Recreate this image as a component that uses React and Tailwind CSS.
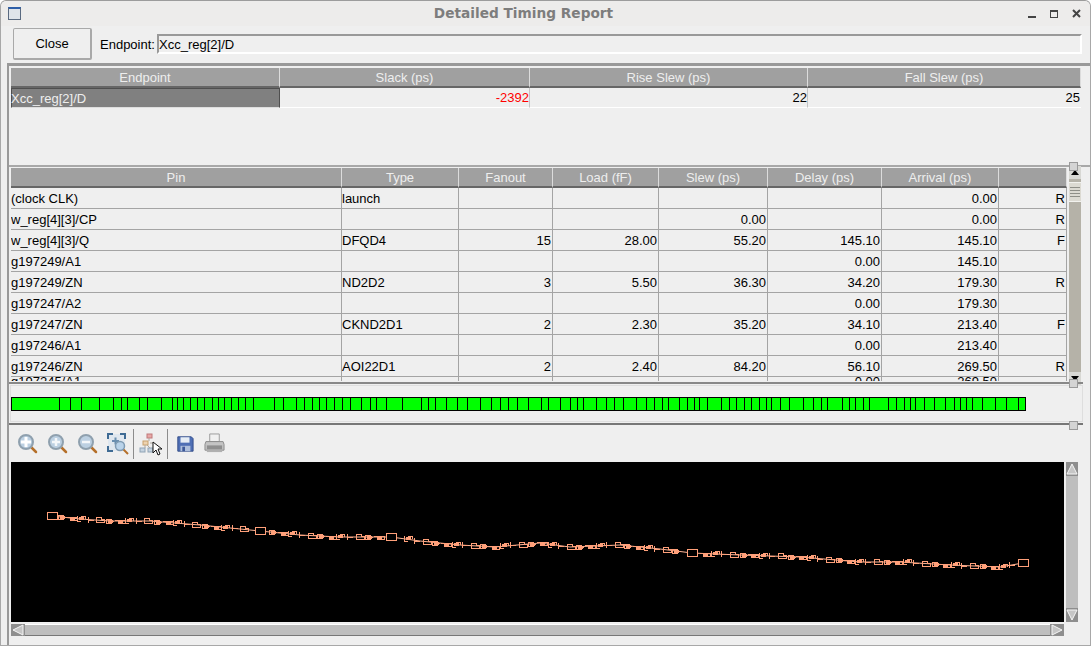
import React from 'react';

const FONT = "font-['Liberation_Sans',Arial,sans-serif]";

const endpointCols = 'grid grid-cols-[269px_250px_278px_273px]';
const pinCols = 'grid grid-cols-[331px_117px_94px_106px_109px_114px_117px_68px]';

const pinHeaders = ['Pin', 'Type', 'Fanout', 'Load (fF)', 'Slew (ps)', 'Delay (ps)', 'Arrival (ps)', ''];

const pinRows = [
    ['(clock CLK)', 'launch', '', '', '', '', '0.00', 'R'],
    ['w_reg[4][3]/CP', '', '', '', '0.00', '', '0.00', 'R'],
    ['w_reg[4][3]/Q', 'DFQD4', '15', '28.00', '55.20', '145.10', '145.10', 'F'],
    ['g197249/A1', '', '', '', '', '0.00', '145.10', ''],
    ['g197249/ZN', 'ND2D2', '3', '5.50', '36.30', '34.20', '179.30', 'R'],
    ['g197247/A2', '', '', '', '', '0.00', '179.30', ''],
    ['g197247/ZN', 'CKND2D1', '2', '2.30', '35.20', '34.10', '213.40', 'F'],
    ['g197246/A1', '', '', '', '', '0.00', '213.40', ''],
    ['g197246/ZN', 'AOI22D1', '2', '2.40', '84.20', '56.10', '269.50', 'R'],
];

const cutRow = ['g197245/A1', '', '', '', '', '0.00', '269.50', ''];

// x position of every black divider in the path bar
const barStops = [
    11, 59, 70, 81, 99, 113, 121, 127, 139, 147, 161, 172, 177, 183, 190, 197, 204, 212, 218, 224, 231, 238, 245, 253,
    274, 283, 296, 304, 312, 319, 326, 334, 342, 350, 361, 370, 376, 386, 402, 421, 428, 435, 446, 457, 467, 480, 491,
    500, 508, 517, 528, 541, 548, 560, 570, 577, 583, 596, 606, 614, 623, 636, 646, 654, 662, 668, 679, 687, 694, 699,
    707, 721, 729, 736, 744, 751, 759, 766, 771, 780, 789, 803, 813, 821, 827, 842, 849, 855, 863, 869, 888, 896, 904,
    910, 915, 924, 934, 945, 954, 960, 966, 972, 982, 995, 1006, 1018, 1025,
];

const pathPoints = [
    [52, 516], [80, 519], [110, 521], [150, 521], [200, 525], [260, 531], [300, 535], [340, 537], [391, 537],
    [420, 541], [460, 545], [495, 547], [540, 543], [570, 547], [620, 545], [660, 549], [692, 553], [740, 555],
    [800, 557], [860, 562], [900, 562], [950, 565], [1000, 567], [1023, 563],
];

const bigCells = [[52, 516], [260, 531], [391, 537], [692, 553], [1023, 563]];

const pathY = (x) => {
    for (let i = 1; i < pathPoints.length; i++) {
        const [x0, y0] = pathPoints[i - 1];
        const [x1, y1] = pathPoints[i];
        if (x <= x1) return y0 + ((y1 - y0) * (x - x0)) / (x1 - x0);
    }
    return 563;
};

const smallCells = [];
for (let x = 62; x < 1014; x += 9.6) {
    if (bigCells.some(([bx]) => Math.abs(bx - x) < 9)) continue;
    const n = smallCells.length;
    smallCells.push([Math.round(x), Math.round(pathY(x)) - (n % 5 === 2 ? 1 : 0), (n * 7) % 5]);
}

const HeaderCell = ({ children }) => (
    <div className="h-[20px] flex items-center justify-center bg-[#a0a0a0] text-[#eeeeee] border-r border-r-[#dcdcdc] border-b-2 border-b-[#666666]">
        {children}
    </div>
);

const ScrollButton = ({ dir }) => {
    const points = {
        up: '1,12 6,2 11,12',
        down: '1,2 6,12 11,2',
        left: '12,1 2,6 12,11',
        right: '2,1 12,6 2,11',
    }[dir];
    const size = dir === 'up' || dir === 'down' ? 'w-[12px] h-[14px]' : 'w-[14px] h-[12px]';
    return (
        <div className={`${size} bg-[#8e8e8e] shrink-0`}>
            <svg width="14" height="14" viewBox="0 0 14 14" className="block">
                <polygon points={points} fill="#c6c6c6" stroke="#f6f6f6" strokeWidth="1" />
            </svg>
        </div>
    );
};

const Magnifier = ({ sign }) => (
    <svg width="22" height="22" viewBox="0 0 22 22">
        <line x1="13" y1="13" x2="19" y2="19" stroke="#b5702a" strokeWidth="2.5" strokeLinecap="round" />
        <circle cx="9" cy="9" r="7" fill="#bcd0e2" stroke="#8fa0ae" strokeWidth="2" />
        {sign === 'fit' && <path d="M4 9h10M9 4v10" stroke="#ffffff" strokeWidth="3" />}
        {sign === 'plus' && <path d="M5 9h8M9 5v8" stroke="#f4f7fa" strokeWidth="2.5" />}
        {sign === 'minus' && <path d="M5 9h8" stroke="#f4f7fa" strokeWidth="2.5" />}
    </svg>
);

const ZoomFrame = () => (
    <svg width="22" height="22" viewBox="0 0 22 22">
        <rect x="1" y="1" width="17" height="17" fill="#dfe7ef" />
        <path d="M1 6V1h5M13 1h5v5M1 13v5h5" fill="none" stroke="#3f6b94" strokeWidth="2" />
        <path d="M5 8h7M8.500 4.500v7" stroke="#6a8fb0" strokeWidth="2" />
        <line x1="16" y1="16" x2="21" y2="21" stroke="#b5702a" strokeWidth="2" />
        <circle cx="13" cy="13" r="4.500" fill="#b9d3ea" stroke="#7f9bb3" strokeWidth="1.500" />
    </svg>
);

const TreeCursor = () => (
    <svg width="24" height="24" viewBox="0 0 24 24">
        <rect x="8" y="2" width="5" height="4" fill="#e8a7a7" stroke="#c07a7a" />
        <rect x="4" y="9" width="5" height="4" fill="#edd3b0" stroke="#c9a26e" />
        <rect x="1" y="16" width="5" height="4" fill="#c5d3e0" stroke="#8fa3b5" />
        <rect x="9" y="16" width="5" height="4" fill="#c5d3e0" stroke="#8fa3b5" />
        <path d="M10 6v3M6 13v3M8 13l3 3M11 11h3" stroke="#b0a8a0" fill="none" />
        <path d="M14 10v11l3-3 2 5 2-1-2-5h4z" fill="#ffffff" stroke="#111111" strokeWidth="1" />
    </svg>
);

const SaveIcon = () => (
    <svg width="18" height="18" viewBox="0 0 20 20">
        <path d="M2 2h15l2 2v14H2z" fill="#4f6fb5" stroke="#2f4a86" />
        <rect x="5" y="2.500" width="10" height="6" fill="#e6edf5" />
        <rect x="5" y="12" width="11" height="6" fill="#aebfdc" />
        <rect x="7" y="13" width="3" height="5" fill="#3c5898" />
    </svg>
);

const PrintIcon = () => (
    <svg width="21" height="21" viewBox="0 0 22 22">
        <path d="M6 1h10v8H6z" fill="#f0f0f0" stroke="#9a9a9a" />
        <path d="M2 9h18l1 3v6H1v-6z" fill="#c4c4c4" stroke="#8a8a8a" />
        <rect x="3" y="13" width="16" height="4" fill="#8f8f8f" />
        <rect x="3" y="18" width="16" height="2" fill="#b0b0b0" />
    </svg>
);

const cellPath = (x, y, kind) => {
    if (kind === 0) return `M${x - 4} ${y - 2}h5v4h-5zM${x + 1} ${y}h3`;
    if (kind === 1) return `M${x - 3} ${y - 3}v6M${x - 3} ${y}h6`;
    if (kind === 2) return `M${x - 5} ${y - 1}h3v3h7v-3h-4`;
    if (kind === 3) return `M${x - 4} ${y - 3}h5v2h3v3h-8z`;
    return `M${x - 4} ${y - 2}v5h4M${x} ${y - 2}h4v3`;
};

const Schematic = () => (
    <svg width="1053" height="160" viewBox="11 462 1053 160" className="block">
        <polyline points={pathPoints.map((p) => p.join(',')).join(' ')} fill="none" stroke="#ffb596" strokeWidth="1" />
        {smallCells.map(([x, y, kind]) => (
            <g key={x} stroke="#ffa07a" strokeWidth="1" fill="none" shapeRendering="crispEdges">
                <path d={cellPath(x, y, kind)} />
                {kind % 2 === 0 && <rect x={x - 2} y={y - 1} width="4" height="2" fill="#ffa07a" />}
            </g>
        ))}
        {bigCells.map(([x, y]) => (
            <rect key={x} x={x - 5} y={y - 4} width="10" height="7.500" fill="#000000" stroke="#ffa07a" strokeWidth="1" shapeRendering="crispEdges" />
        ))}
    </svg>
);

const App = () => {
    return (
        <div className={`${FONT} w-[1092px] h-[647px] overflow-hidden bg-white text-[13px] leading-none text-black`}>
            <div className="w-[1091px] h-[646px] flex flex-col bg-[#efefef] rounded-t-md border border-[#a8a8a8] border-t-[#9c9c9c]">
                {/* title bar */}
                <div className="h-[25px] shrink-0 flex items-center bg-[#edeceb] rounded-t-md pl-[7px] pr-[9px]">
                    <div className="w-[13px] h-[13px] border border-[#5a6a80] border-t-2 border-t-[#2f5fa8] bg-[#dfe4ea]" />
                    <div className="flex-1 text-center font-['DejaVu_Sans'] font-bold text-[13.7px] text-[#7d7d7d] pr-[2px]">
                        Detailed Timing Report
                    </div>
                    <div className="flex items-center gap-[14px] text-[#444444]">
                        <div className="w-[8px] h-[2px] bg-[#444444] mt-[6px]" />
                        <div className="w-[8px] h-[8px] border border-[#444444] border-t-2" />
                        <svg width="9" height="9" viewBox="0 0 9 9">
                            <path d="M1 1l7 7M8 1l-7 7" stroke="#444444" strokeWidth="2" />
                        </svg>
                    </div>
                </div>

                {/* close + endpoint */}
                <div className="h-[37px] shrink-0 flex pl-[12px] pt-[2px]">
                    <button className="w-[79px] h-[32px] bg-[#efefef] border border-[#a9a9a9] border-b-2 border-r-2 rounded-[2px] text-[13px]">
                        Close
                    </button>
                    <div className="ml-[8px] w-[57px] h-[32px] flex items-center">Endpoint:</div>
                    <div className="mt-[6px] w-[925px] h-[20px] flex items-center bg-[#efefef] border-2 border-t-[#999999] border-l-[#999999] border-r-white border-b-white">
                        Xcc_reg[2]/D
                    </div>
                </div>

                {/* main panes */}
                <div className="flex-1 min-h-0 ml-[6px] border-l-2 border-l-[#999999] border-t-[3px] border-t-[#999999] flex flex-col relative">
                    {/* endpoint table */}
                    <div className="h-[99px] shrink-0 pt-[2px] pl-[2px]">
                        <div className={endpointCols}>
                            {['Endpoint', 'Slack (ps)', 'Rise Slew (ps)', 'Fall Slew (ps)'].map((h) => (
                                <HeaderCell key={h}>{h}</HeaderCell>
                            ))}
                        </div>
                        <div className={`${endpointCols} h-[20px]`}>
                            <div className="flex items-center bg-[#808080] text-[#eeeeee] border border-[#4f4f4f] border-b-[#dddddd]">
                                <span className="-ml-px">Xcc_reg[2]/D</span>
                            </div>
                            <div className="flex items-center justify-end text-[#ff0000] border-b border-b-white border-r border-r-[#c4c4c4]">-2392</div>
                            <div className="flex items-center justify-end border-b border-b-white border-r border-r-[#c4c4c4]">22</div>
                            <div className="flex items-center justify-end pr-[1px] border-b border-b-white">25</div>
                        </div>
                    </div>

                    {/* pin table + scrollbar */}
                    <div className="h-[218px] shrink-0 border-t-2 border-t-[#a8a8a8] flex pl-[2px]">
                        <div className="w-[1057px] h-[214px] overflow-hidden pt-[1px]">
                            <div className={pinCols}>
                                {pinHeaders.map((h, i) => (
                                    <HeaderCell key={i}>{h}</HeaderCell>
                                ))}
                            </div>
                            {pinRows.map((row) => (
                                <div key={row[0]} className={`${pinCols} h-[21px]`}>
                                    {row.map((cell, i) => (
                                        <div
                                            key={i}
                                            className={`flex items-center pr-[1px] border-r border-b border-[#a4a4a4] ${i < 2 ? 'justify-start' : 'justify-end'}`}
                                        >
                                            {cell}
                                        </div>
                                    ))}
                                </div>
                            ))}
                            {/* half hidden row at the bottom of the viewport */}
                            <div className={`${pinCols} h-[21px] leading-[9px]`}>
                                {cutRow.map((cell, i) => (
                                    <div
                                        key={i}
                                        className={`flex items-start pr-[1px] border-r border-[#a4a4a4] ${i < 2 ? 'justify-start' : 'justify-end'}`}
                                    >
                                        {cell}
                                    </div>
                                ))}
                            </div>
                        </div>
                        <div className="w-[12px] h-[219px] -mt-[1px] ml-[1px] flex flex-col bg-[#b5b2a8]">
                            <div className="h-[13px] bg-[#d8d8d4] flex items-center justify-center">
                                <div className="w-0 h-0 border-x-[4px] border-x-transparent border-b-[5px] border-b-black" />
                            </div>
                            <div className="mt-[3px] h-[20px] bg-[#dcdad2] flex flex-col justify-center gap-[2px] px-[1px] border-y border-[#f2f2ee]">
                                <div className="h-px bg-[#8f8f88]" />
                                <div className="h-px bg-[#8f8f88]" />
                                <div className="h-px bg-[#8f8f88]" />
                                <div className="h-px bg-[#8f8f88]" />
                            </div>
                            <div className="flex-1" />
                            <div className="h-[13px] bg-[#d8d8d4] flex items-center justify-center">
                                <div className="w-0 h-0 border-x-[4px] border-x-transparent border-t-[5px] border-t-black" />
                            </div>
                        </div>
                    </div>

                    {/* path bar */}
                    <div className="h-[43px] shrink-0 border-t-2 border-t-[#888888] border-b-2 border-b-[#777777] -mt-[1px] pl-[1px] pt-[1px] mr-[7px]">
                        <div className="h-[37px] border border-[#dedede] pt-[11px]">
                            <div className="flex w-[1015px] h-[14px] border-y border-r border-black bg-[#00ff00]">
                                {barStops.slice(1).map((stop, i) => (
                                    <div
                                        key={stop}
                                        className="h-full shrink-0 border-l border-l-black"
                                        style={{ width: stop - barStops[i] }}
                                    />
                                ))}
                            </div>
                        </div>
                    </div>

                    {/* toolbar */}
                    <div className="h-[37px] shrink-0 flex items-center pl-[4px]">
                        <div className="w-[30px] flex justify-center"><Magnifier sign="fit" /></div>
                        <div className="w-[30px] flex justify-center"><Magnifier sign="plus" /></div>
                        <div className="w-[30px] flex justify-center"><Magnifier sign="minus" /></div>
                        <div className="w-[30px] flex justify-center"><ZoomFrame /></div>
                        <div className="w-px h-[30px] bg-[#8c8c8c]" />
                        <div className="w-[33px] flex justify-center"><TreeCursor /></div>
                        <div className="w-px h-[30px] bg-[#8c8c8c]" />
                        <div className="w-[34px] flex justify-center"><SaveIcon /></div>
                        <div className="w-[24px] flex justify-center"><PrintIcon /></div>
                    </div>

                    {/* schematic */}
                    <div className="flex pl-[2px] gap-[2px]">
                        <div className="w-[1053px] h-[160px] bg-black">
                            <Schematic />
                        </div>
                        <div className="w-[12px] h-[160px] flex flex-col justify-between bg-[#bebebe]">
                            <ScrollButton dir="up" />
                            <ScrollButton dir="down" />
                        </div>
                    </div>
                    <div className="w-[1053px] h-[12px] mt-[2px] ml-[2px] flex justify-between bg-[#bebebe] border-t border-t-white border-b border-b-[#777777]">
                        <div className="-my-px"><ScrollButton dir="left" /></div>
                        <div className="-my-px"><ScrollButton dir="right" /></div>
                    </div>

                    {/* sash handles */}
                    <div className="absolute left-[1060px] top-[96px] w-[9px] h-[9px] bg-[#d4d4d4] border border-[#9a9a9a]" />
                    <div className="absolute left-[1060px] top-[313px] w-[9px] h-[9px] bg-[#d4d4d4] border border-[#9a9a9a]" />
                    <div className="absolute left-[1060px] top-[355px] w-[9px] h-[9px] bg-[#d4d4d4] border border-[#9a9a9a]" />
                </div>
            </div>
        </div>
    );
};

export default App;
